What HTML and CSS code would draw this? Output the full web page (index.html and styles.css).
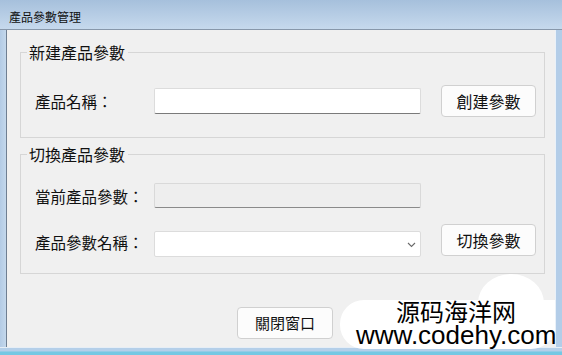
FILE: index.html
```html
<!DOCTYPE html>
<html lang="zh-Hant">
<head>
<meta charset="utf-8">
<title>產品參數管理</title>
<link rel="stylesheet" href="styles.css">
</head>
<body>
<div class="window">
  <div class="titlebar">產品參數管理</div>
  <div class="body-row">
    <div class="frame-left"></div>
    <div class="client">
      <fieldset class="group group-new">
        <legend>新建產品參數</legend>
        <div class="row">
          <span class="lbl">產品名稱<span class="colon">：</span></span>
          <div class="input"></div>
          <button class="btn">創建參數</button>
        </div>
      </fieldset>
      <fieldset class="group group-switch">
        <legend>切換產品參數</legend>
        <div class="row row-current">
          <span class="lbl">當前產品參數<span class="colon">：</span></span>
          <div class="input readonly"></div>
        </div>
        <div class="row row-combo">
          <span class="lbl">產品參數名稱<span class="colon">：</span></span>
          <div class="input combo">
            <svg class="chev" width="9" height="6" viewBox="0 0 9 6"><path d="M1 1 L4.5 4.5 L8 1" fill="none" stroke="#6a6a6a" stroke-width="1.1"/></svg>
          </div>
          <button class="btn">切換參數</button>
        </div>
      </fieldset>
      <div class="footer">
        <button class="btn btn-close">關閉窗口</button>
      </div>
    </div>
    <div class="frame-right"></div>
  </div>
  <div class="frame-bottom"></div>

  <div class="watermark">
    <svg class="wm-cloud" width="222" height="85" viewBox="0 0 222 85">
      <rect x="0" y="30" width="215" height="49" rx="24" fill="#ffffff"/>
      <ellipse cx="171" cy="33" rx="33" ry="29" fill="#ffffff"/>
      <rect x="150" y="30" width="65" height="40" fill="#ffffff"/>
    </svg>
    <div class="wm-cn">源码海洋网</div>
    <div class="wm-url">www.codehy.com</div>
  </div>
</div>
</body>
</html>
```
FILE: styles.css
```css
html, body {
  margin: 0;
  padding: 0;
}
body {
  width: 562px;
  height: 355px;
  overflow: hidden;
  background: #b8cfe7;
  font-family: "Noto Sans CJK TC", "Noto Sans CJK SC", sans-serif;
  color: #111;
}
.window {
  position: relative;
  width: 562px;
  height: 355px;
  display: flex;
  flex-direction: column;
}
.titlebar {
  height: 29px;
  border-bottom: 1px solid #8797aa;
  background: linear-gradient(#a6c0dc, #c6d9ed);
  font-size: 12px;
  line-height: 34px;
  padding-left: 9px;
  color: #111;
  box-sizing: content-box;
}
.body-row {
  display: flex;
  height: 317px;
}
.frame-left {
  width: 6px;
  border-right: 1px solid #6f7f92;
  background: linear-gradient(90deg, #b3cbe5, #c4d8ec);
}
.frame-right {
  width: 6px;
  border-left: 1px solid #e9f1f9;
  background: #b3cde8;
}
.client {
  width: 548px;
  background: #f0f0f0;
  padding: 12px 10px 0 13px;
  box-sizing: border-box;
  display: flex;
  flex-direction: column;
}
.frame-bottom {
  height: 8px;
  border-top: 1px solid #e6eef6;
  background: linear-gradient(#b4cfe9 0, #b4cfe9 3px, #74c8e3 4px, #74c8e3 100%);
  box-sizing: border-box;
}
.group {
  margin: 0;
  border: 1px solid #d6d6d6;
  padding: 23px 0 20px 14px;
  min-width: 0;
}
.group legend {
  font-size: 16px;
  line-height: 20px;
  height: 20px;
  padding: 0 3px 0 2px;
  margin-left: -8px;
  color: #111;
}
.group-switch {
  margin-top: 6px;
  padding-top: 19px;
  padding-bottom: 17px;
}
.row {
  display: flex;
  align-items: center;
}
.lbl {
  width: 119px;
  flex: none;
  font-size: 15.5px;
  line-height: 20px;
  white-space: nowrap;
}
.colon {
  font-family: "Noto Sans CJK SC", sans-serif;
}
.input {
  width: 267px;
  height: 26px;
  box-sizing: border-box;
  background: #fff;
  border: 1px solid #dcdcdc;
  border-bottom-color: #7a7a7a;
  border-radius: 2px;
}
.readonly {
  height: 25px;
  background: #eeeeee;
  border-color: #d9d9d9;
  border-bottom-color: #8a8a8a;
}
.row-combo {
  margin-top: 16px;
  align-items: flex-end;
}
.row-combo .lbl {
  align-self: center;
  margin-top: 4px;
}
.combo {
  margin-bottom: -1px;
  border-bottom-color: #dcdcdc;
  display: flex;
  align-items: center;
  justify-content: flex-end;
  padding-right: 4px;
}
.chev {
  margin-top: 2px;
}
.btn {
  margin: 0 0 0 20px;
  width: 95px;
  height: 32px;
  box-sizing: border-box;
  background: #fcfcfc;
  border: 1px solid #d0d0d0;
  border-radius: 4px;
  font-family: "Noto Sans CJK TC", sans-serif;
  font-size: 16px;
  line-height: 20px;
  color: #111;
  padding: 0;
}
.footer {
  display: flex;
  justify-content: center;
  margin-top: 33px;
  padding-left: 5px;
}
.btn-close {
  margin: 0;
  width: 96px;
  font-size: 15px;
}
.watermark {
  position: absolute;
  left: 340px;
  top: 270px;
  width: 222px;
  height: 85px;
}
.wm-cloud {
  position: absolute;
  left: 0;
  top: 0;
}
.wm-cn {
  position: absolute;
  left: 56px;
  top: 29px;
  font-family: "Noto Sans CJK SC", sans-serif;
  font-size: 24px;
  line-height: 24px;
  color: #000;
  white-space: nowrap;
}
.wm-url {
  position: absolute;
  left: 16px;
  top: 54px;
  font-family: "Liberation Sans", sans-serif;
  font-size: 26px;
  line-height: 22px;
  color: #000;
  white-space: nowrap;
}
```
